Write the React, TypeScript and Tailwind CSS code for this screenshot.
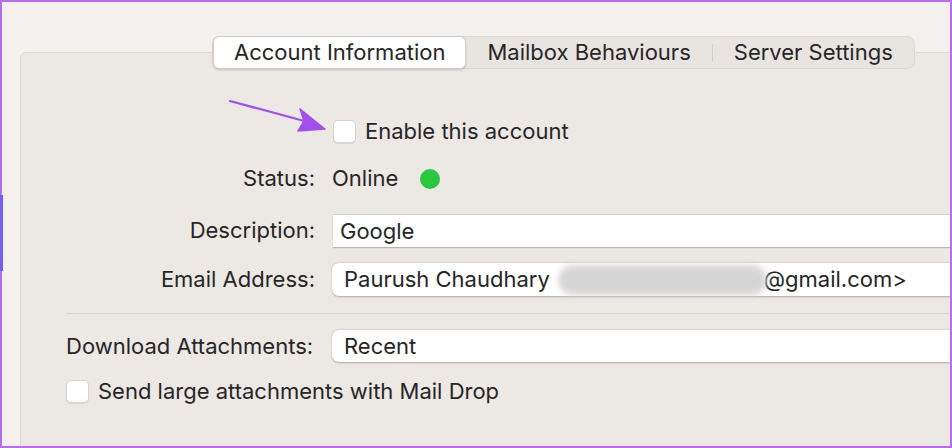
const font = { fontFamily: "Inter, 'Noto Sans', sans-serif" };

function Checkbox() {
  return (
    <div className="h-[23px] w-[23px] shrink-0 rounded-[5px] border border-[#d6d2ce] bg-white shadow-[0_1px_1px_rgba(0,0,0,0.08)]" />
  );
}

function Label({ children }: { children: React.ReactNode }) {
  return (
    <div className="w-[249px] shrink-0 whitespace-nowrap text-right">{children}</div>
  );
}

export default function App() {
  return (
    <div
      className="relative h-[448px] w-[952px] overflow-hidden bg-[#f3f0ed] text-[22px] text-[#262626]"
      style={font}
    >
      <div className="ml-[20px] mt-[52px] h-[420px] w-[960px] rounded-md border border-[#dedad6] bg-[#ece8e4]">

        <div className="-mt-[17px] ml-[191px] flex h-[33px] w-fit items-center whitespace-nowrap rounded-lg border border-[#dcd8d4] bg-[#e8e4e0]">
          <div className="flex h-[33px] items-center rounded-md border border-[#d2cecb] bg-white px-[20px] shadow-[0_1px_2px_rgba(0,0,0,0.18)]">
            Account Information
          </div>
          <div className="px-[21px]">Mailbox Behaviours</div>
          <div className="h-[18px] w-px bg-[#d2cecb]" />
          <div className="px-[21px]">Server Settings</div>
        </div>

        <div className="flex flex-col pl-[45px]">

          <div className="mt-[51px] flex h-[23px] items-center">
            <div className="w-[266px] shrink-0" />
            <div className="ml-px flex items-center gap-[9px]">
              <Checkbox />
              <span>Enable this account</span>
            </div>
          </div>

          <div className="mt-[19px] flex h-[33px] items-center gap-[17px]">
            <Label>Status:</Label>
            <span>Online</span>
            <div className="ml-[5px] h-[20px] w-[20px] rounded-full bg-[#2ac840]" />
          </div>

          <div className="mt-[19px] flex h-[33px] items-center gap-[17px]">
            <Label>Description:</Label>
            <div className="ml-px flex h-[33px] flex-1 items-center border-t border-[#d4d0cc] bg-white pl-[7px] shadow-[0_1px_1px_rgba(0,0,0,0.22)]">
              Google
            </div>
          </div>

          <div className="mt-[16px] flex h-[33px] items-center gap-[17px]">
            <Label>Email Address:</Label>
            <div className="flex h-[33px] flex-1 items-center whitespace-nowrap rounded-l-[7px] bg-white pl-[12px] shadow-[0_0.5px_2px_rgba(0,0,0,0.28)]">
              <span>Paurush Chaudhary</span>
              <div className="ml-[8px] h-[30px] w-[209px] shrink-0 rounded-full bg-[#d6d6d6] blur-[3px]" />
              <span className="-ml-[3px]">@gmail.com&gt;</span>
            </div>
          </div>

          <div className="mt-[17px] h-px bg-[#d6d2ce]" />

          <div className="mt-[16px] flex h-[32px] items-center gap-[17px]">
            <div className="w-[249px] shrink-0 whitespace-nowrap">Download Attachments:</div>
            <div className="flex h-[32px] flex-1 items-center rounded-l-[7px] bg-white pl-[12px] shadow-[0_0.5px_2px_rgba(0,0,0,0.28)]">
              Recent
            </div>
          </div>

          <div className="mt-[18px] flex h-[23px] items-center gap-[9px]">
            <Checkbox />
            <span>Send large attachments with Mail Drop</span>
          </div>
        </div>
      </div>

      <svg
        className="absolute left-[228px] top-[98px]"
        width="104"
        height="36"
        viewBox="0 0 104 36"
      >
        <line x1="2" y1="3" x2="80" y2="24" stroke="#a24ff0" strokeWidth="2.2" strokeLinecap="round" />
        <path d="M97 31 L70 33 L76 23 L72 11 Z" fill="#a24ff0" strokeLinejoin="round" stroke="#a24ff0" strokeWidth="1.5" />
      </svg>

      <div className="pointer-events-none absolute inset-0 border-2 border-[#b46ef2]" />
      <div className="pointer-events-none absolute left-0 top-[195px] h-[76px] w-[3px] bg-[#6f5ff2]" />
    </div>
  );
}
